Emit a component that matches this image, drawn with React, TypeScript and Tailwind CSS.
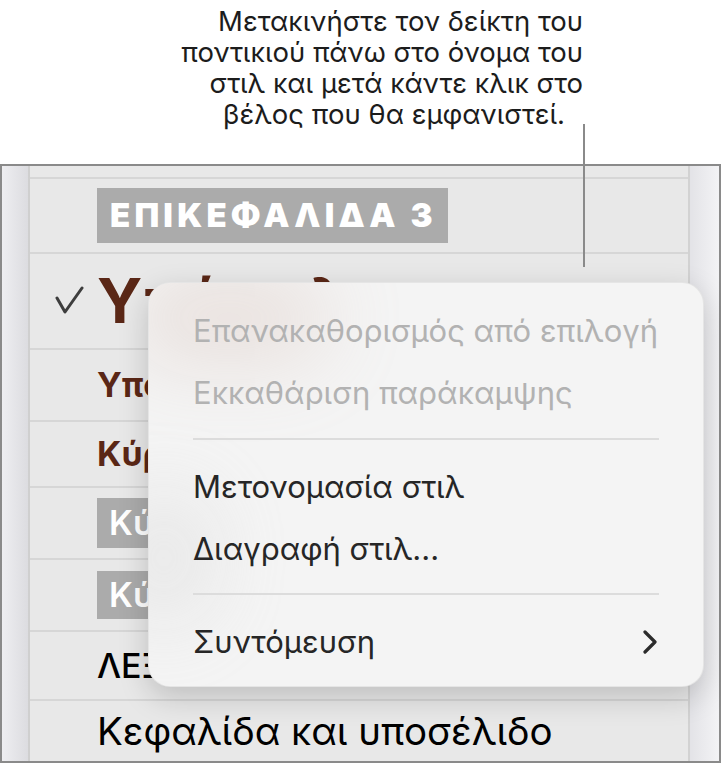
// style rows behind the popup menu
const rowLine = 'border-b-2 border-[#d6d6d6]';

const StyleRows = () => (
  <div className="flex-1 flex flex-col bg-[#e8e8e8] overflow-hidden">
    <div className={`h-[13px] shrink-0 ${rowLine}`} />

    <div className={`h-[75px] shrink-0 flex items-center pl-[67px] ${rowLine}`}>
      <span className="bg-[#ababab] text-white font-black text-[33px] leading-[55px] pl-[13px] pr-[11px] tracking-[4.2px]">
        ΕΠΙΚΕΦΑΛΙΔΑ 3
      </span>
    </div>

    <div className={`h-[96px] shrink-0 flex items-center relative pl-[67px] ${rowLine}`}>
      <svg className="absolute left-[25px] top-[32px]" width="30" height="30" viewBox="0 0 30 30" fill="none">
        <path d="M2 12 L10 26 L27 2" stroke="#3d3d3d" strokeWidth="3" strokeLinecap="round" strokeLinejoin="round" />
      </svg>
      <span className="text-[#5a2716] font-bold text-[62px] leading-none tracking-[2px]">Υπότιτλος</span>
    </div>

    <div className={`h-[72px] shrink-0 flex items-center pl-[67px] ${rowLine}`}>
      <span className="text-[#5a2716] font-bold text-[34px] leading-none">Υπότιτλος 2</span>
    </div>

    <div className={`h-[66px] shrink-0 flex items-center pl-[67px] ${rowLine}`}>
      <span className="text-[#5a2716] font-bold text-[34px] leading-none">Κύριο κείμενο</span>
    </div>

    <div className={`h-[72px] shrink-0 flex items-center pl-[67px] ${rowLine}`}>
      <span className="bg-[#ababab] text-white font-semibold text-[34px] leading-[50px] px-[12px]">Κύριο κείμενο</span>
    </div>

    <div className={`h-[72px] shrink-0 flex items-center pl-[67px] ${rowLine}`}>
      <span className="bg-[#ababab] text-white font-semibold text-[34px] leading-[48px] px-[12px]">Κύριο μικρό</span>
    </div>

    <div className={`h-[69px] shrink-0 flex items-center pl-[67px] ${rowLine}`}>
      <span className="text-black font-medium text-[34px] leading-none">ΛΕΞΗ-ΚΛΕΙΔΙ</span>
    </div>

    <div className="flex-1 flex items-center pl-[67px]">
      <span className="text-black text-[38.5px] leading-none">Κεφαλίδα και υποσέλιδο</span>
    </div>
  </div>
);

const MenuItem = ({ label, disabled, submenu }: { label: string; disabled?: boolean; submenu?: boolean }) => (
  <div
    className={`relative h-[62px] flex items-center justify-between px-[44px] text-[31px] whitespace-nowrap ${
      disabled ? 'text-[#b2b2b2]' : 'text-[#262626]'
    }`}
  >
    <span>{label}</span>
    {submenu && (
      <svg width="16" height="24" viewBox="0 0 16 24" fill="none" className="mr-[1px]">
        <path d="M3 2 L13 12 L3 22" stroke="#2b2b2b" strokeWidth="3.2" strokeLinecap="round" strokeLinejoin="round" />
      </svg>
    )}
  </div>
);

const Separator = ({ top, bottom }: { top: string; bottom: string }) => (
  <div className={`relative ${top} ${bottom} px-[44px]`}>
    <div className="h-[2px] bg-[#dcdcdc]" />
  </div>
);

export default function App() {
  return (
    <div className="relative w-[721px] h-[763px] bg-white overflow-hidden font-['Inter','Noto_Sans',sans-serif]">
      {/* callout text */}
      <div className="h-[164px] pt-[6px] pr-[138px] flex flex-col items-end text-[27.5px] leading-[31px] text-[#1c1c1c]">
        <div>Μετακινήστε τον δείκτη του</div>
        <div>ποντικιού πάνω στο όνομα του</div>
        <div>στιλ και μετά κάντε κλικ στο</div>
        <div className="pr-[18px]">βέλος που θα εμφανιστεί.</div>
      </div>

      {/* styles list panel */}
      <div className="h-[599px] flex border-2 border-[#8a8a8a]">
        <div className="w-[26px] shrink-0 bg-gradient-to-r from-[#eeeef1] to-[#dcdce0]" />
        <div className="w-[2px] shrink-0 bg-[#cfcfcf]" />
        <StyleRows />
        <div className="w-[2px] shrink-0 bg-[#d2d2d2]" />
        <div className="w-[29px] shrink-0 bg-gradient-to-r from-[#e3e3e7] to-[#f3f3f5]" />
      </div>

      {/* pointer line */}
      <div className="absolute left-[583px] top-[124px] w-[2px] h-[143px] bg-[#8a8a8a]" />

      {/* popup menu */}
      <div className="absolute left-[148px] top-[282px] w-[556px] h-[405px] rounded-[22px] bg-[#f4f4f4] border border-black/[0.06] shadow-[0_10px_30px_rgba(0,0,0,0.18)] pt-[17px] overflow-hidden">
        {/* soft tint of the rows showing through the material */}
        <div className="absolute left-[-20px] top-[-10px] w-[200px] h-[90px] rounded-full bg-[#c9a89a] opacity-25 blur-2xl" />
        <div className="absolute left-[-30px] top-[210px] w-[90px] h-[130px] rounded-full bg-[#c8c8c8] opacity-30 blur-2xl" />
        <MenuItem label="Επανακαθορισμός από επιλογή" disabled />
        <MenuItem label="Εκκαθάριση παράκαμψης" disabled />
        <Separator top="pt-[14px]" bottom="pb-[16px]" />
        <MenuItem label="Μετονομασία στιλ" />
        <MenuItem label="Διαγραφή στιλ..." />
        <Separator top="pt-[13px]" bottom="pb-[16px]" />
        <MenuItem label="Συντόμευση" submenu />
      </div>
    </div>
  );
}
